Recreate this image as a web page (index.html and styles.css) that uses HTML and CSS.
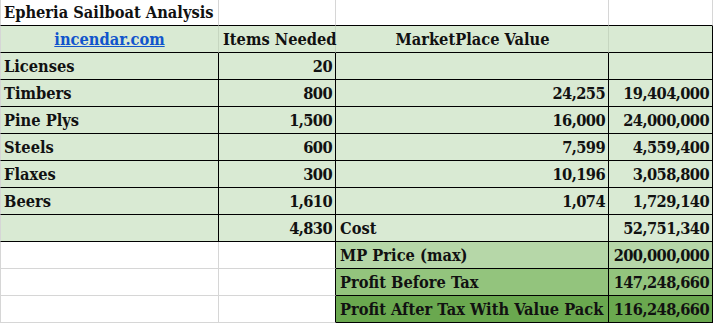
FILE: index.html
```html
<!DOCTYPE html>
<html lang="en">
<head>
    <meta charset="UTF-8">
    <meta name="viewport" content="width=device-width, initial-scale=1.0">
    <title>Epheria Sailboat Analysis</title>
    <link rel="stylesheet" href="styles.css">
</head>
<body>
    <table class="sheet">
        <colgroup>
            <col class="col-a">
            <col class="col-b">
            <col class="col-c">
            <col class="col-d">
        </colgroup>
        <tr class="title-row">
            <td>Epheria Sailboat Analysis</td>
            <td></td>
            <td></td>
            <td></td>
        </tr>
        <tr class="head-row">
            <td class="center"><a href="#">incendar.com</a></td>
            <td class="center">Items Needed</td>
            <td class="center">MarketPlace Value</td>
            <td class="edge"></td>
        </tr>
        <tr class="item-row">
            <td>Licenses</td>
            <td class="num">20</td>
            <td class="num"></td>
            <td class="num"></td>
        </tr>
        <tr class="item-row">
            <td>Timbers</td>
            <td class="num">800</td>
            <td class="num">24,255</td>
            <td class="num">19,404,000</td>
        </tr>
        <tr class="item-row">
            <td>Pine Plys</td>
            <td class="num">1,500</td>
            <td class="num">16,000</td>
            <td class="num">24,000,000</td>
        </tr>
        <tr class="item-row">
            <td>Steels</td>
            <td class="num">600</td>
            <td class="num">7,599</td>
            <td class="num">4,559,400</td>
        </tr>
        <tr class="item-row">
            <td>Flaxes</td>
            <td class="num">300</td>
            <td class="num">10,196</td>
            <td class="num">3,058,800</td>
        </tr>
        <tr class="item-row">
            <td>Beers</td>
            <td class="num">1,610</td>
            <td class="num">1,074</td>
            <td class="num">1,729,140</td>
        </tr>
        <tr class="item-row">
            <td></td>
            <td class="num">4,830</td>
            <td>Cost</td>
            <td class="num">52,751,340</td>
        </tr>
        <tr class="sum-row price">
            <td></td>
            <td></td>
            <td>MP Price (max)</td>
            <td class="num">200,000,000</td>
        </tr>
        <tr class="sum-row before">
            <td></td>
            <td></td>
            <td>Profit Before Tax</td>
            <td class="num">147,248,660</td>
        </tr>
        <tr class="sum-row after">
            <td></td>
            <td></td>
            <td>Profit After Tax With Value Pack</td>
            <td class="num">116,248,660</td>
        </tr>
    </table>
</body>
</html>
```

FILE: styles.css
```css
body {
    margin: 0;
    background: #fff;
    font-family: "DejaVu Serif Condensed", "DejaVu Serif", serif;
    font-weight: bold;
    font-size: 16.3px;
    color: #111;
}

.sheet {
    border-collapse: separate;
    border-spacing: 0;
    table-layout: fixed;
    width: 713px;
}

.col-a { width: 219px; }
.col-b { width: 117px; }
.col-c { width: 273px; }
.col-d { width: 104px; }

.sheet td {
    box-sizing: border-box;
    height: 27px;
    padding: 0 3px 3px 4px;
    line-height: 19px;
    vertical-align: bottom;
    white-space: nowrap;
    border-right: 1px solid #000;
    border-bottom: 1px solid #000;
}

.sheet td:first-child {
    border-left: 1px solid #d6d6d6;
    padding-left: 3px;
}

/* the slab digits here run wider than the sheet's font */
.num {
    text-align: right;
    letter-spacing: -0.6px;
}

.center { text-align: center; }

.sheet a {
    color: #1155cc;
    text-decoration: underline;
}

/* title row: plain sheet, grey gridlines */
.title-row td {
    height: 26px;
    border-right-color: #d6d6d6;
}

.head-row td {
    background: #d9ead3;
    border-right-color: #c6d6c0;
}

.head-row td.edge { border-right-color: #000; }

.item-row td { background: #d9ead3; }

/* bottom block: only the last two columns are filled */
.sum-row td:nth-child(1) {
    border-right-color: #d6d6d6;
    border-bottom-color: #d6d6d6;
}

.sum-row td:nth-child(2) { border-bottom-color: #d6d6d6; }

.price td:nth-child(n+3) { background: #b6d7a8; }
.before td:nth-child(n+3) { background: #93c47d; }
.after td:nth-child(n+3) { background: #6aa84f; }
```
